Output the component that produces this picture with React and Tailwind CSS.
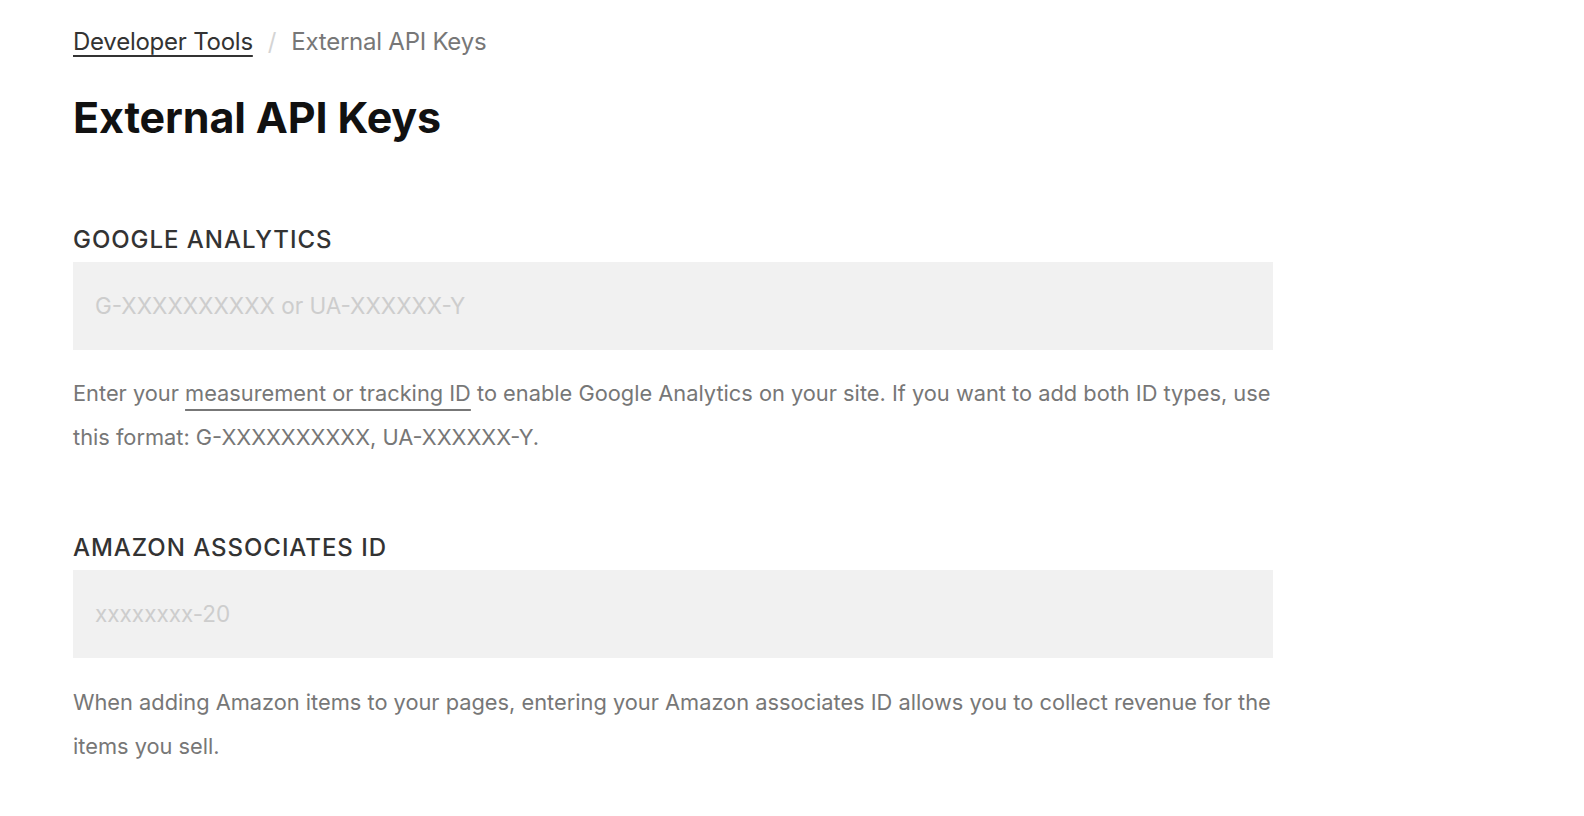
export default function App() {
  const font = { fontFamily: 'Inter, "Noto Sans", sans-serif' };
  return (
    <div className="min-h-[816px] bg-white" style={font}>
      <div className="pl-[73px] pt-[26px] w-[1273px]">
        <nav className="flex items-center text-[24px] leading-[31px] tracking-[-0.01em]">
          <a className="text-[#333] underline underline-offset-[5px] decoration-[1.5px]">Developer Tools</a>
          <span className="mx-[15px] text-[#d4d4d4]">/</span>
          <span className="text-[#777]">External API Keys</span>
        </nav>
        <h1 className="mt-[34px] text-[43px] leading-[52px] font-bold text-[#111] tracking-[-0.003em]">External API Keys</h1>

        <section className="mt-[82px]">
          <h2 className="text-[24px] leading-[30px] font-medium tracking-[0.04em] text-[#333]">GOOGLE ANALYTICS</h2>
          <div className="mt-[7px] h-[88px] bg-[#f1f1f1] flex items-center px-[22px]">
            <span className="text-[22.5px] text-[#cdcdcd]">G-XXXXXXXXXX or UA-XXXXXX-Y</span>
          </div>
          <p className="mt-[21px] text-[21.8px] leading-[44px] text-[#777] whitespace-nowrap">
            Enter your{" "}
            <a className="underline underline-offset-[8px] decoration-[1.5px] decoration-[#777]">measurement or tracking ID</a>{" "}
            to enable Google Analytics on your site. If you want to add both ID types, use
            <br />
            this format: G-XXXXXXXXXX, UA-XXXXXX-Y.
          </p>
        </section>

        <section className="mt-[74px]">
          <h2 className="text-[24px] leading-[30px] font-medium tracking-[0.04em] text-[#333]">AMAZON ASSOCIATES ID</h2>
          <div className="mt-[7px] h-[88px] bg-[#f1f1f1] flex items-center px-[22px]">
            <span className="text-[22.5px] text-[#cdcdcd]">xxxxxxxx-20</span>
          </div>
          <p className="mt-[22px] text-[21.8px] leading-[44px] text-[#777] whitespace-nowrap">
            When adding Amazon items to your pages, entering your Amazon associates ID allows you to collect revenue for the
            <br />
            items you sell.
          </p>
        </section>
      </div>
    </div>
  );
}
